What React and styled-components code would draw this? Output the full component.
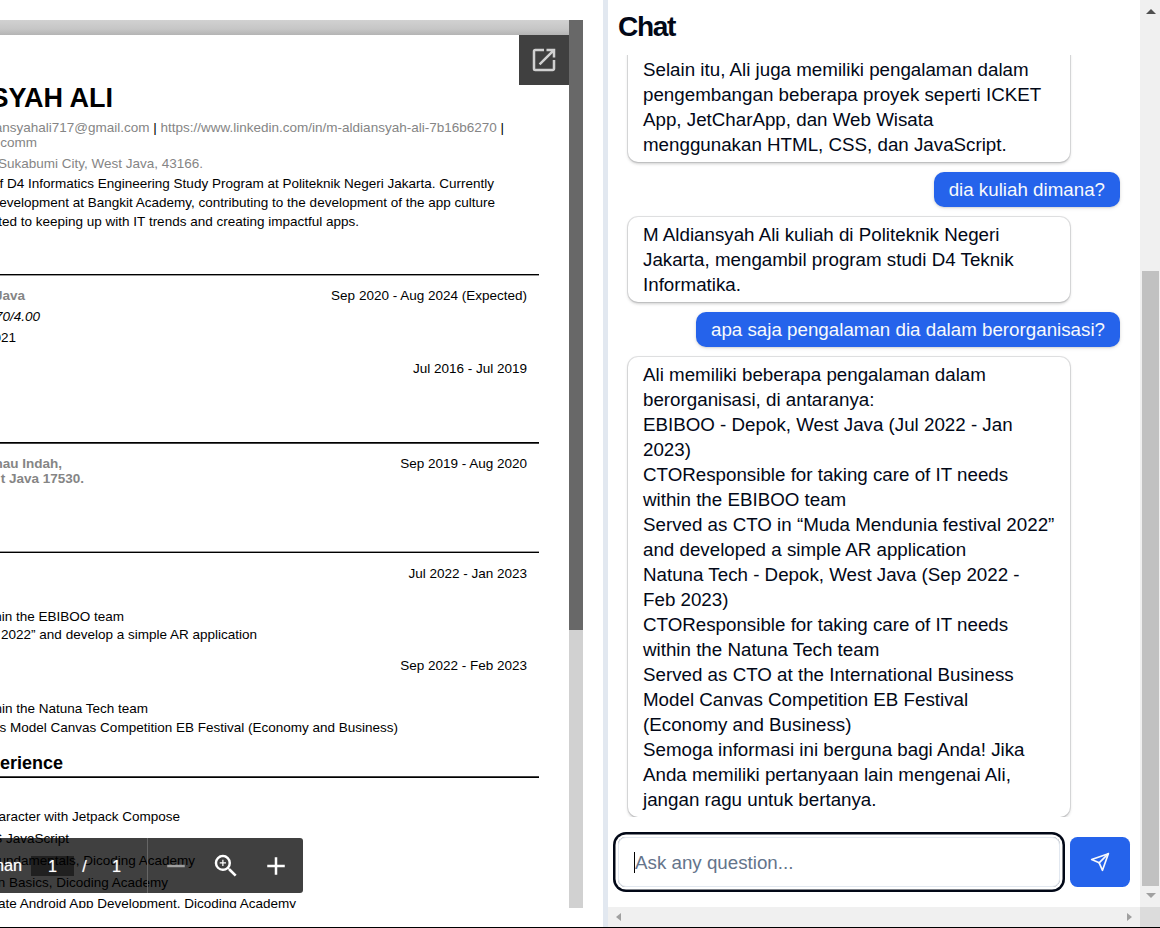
import React from "react";
import styled, { createGlobalStyle, css } from "styled-components";
import { MdOpenInNew, MdRemove, MdZoomIn, MdAdd } from "react-icons/md";

const GlobalStyle = createGlobalStyle`
  * { box-sizing: border-box; }
  html, body { margin: 0; padding: 0; background: #fff; overflow: hidden; }
  body { font-family: "Liberation Sans", Arial, sans-serif; color: #020817; }
`;

const Screen = styled.div`
  width: 1160px;
  height: 928px;
  display: flex;
  overflow: hidden;
  border-bottom: 1px solid #000;
`;

const ViewerPane = styled.section`
  width: 603px;
  padding: 20px 20px 19px 0;
  display: flex;
`;

const Viewer = styled.div`
  position: relative;
  flex: 1;
  height: 888px;
  display: flex;
  overflow: hidden;
`;

const DocumentArea = styled.div`
  flex: 1;
  display: flex;
  flex-direction: column;
  overflow: hidden;
`;

const PageGap = styled.div`
  height: 15px;
  flex: none;
  background: linear-gradient(#d1d1d1, #c6c6c6 60%, #b4b4b4);
`;

const Page = styled.article`
  flex: 1;
  min-height: 0;
  overflow: hidden;
  background: #fff;
  color: #000;
  font-size: 13.5px;
  line-height: 15px;
`;

const Row = styled.div`
  display: flex;
  justify-content: flex-end;
  height: ${(p) => p.$h || 15}px;
  width: ${(p) => p.$end}px;
  margin-top: ${(p) => p.$gap || 0}px;
  white-space: pre;
`;

const SplitRow = styled.div`
  display: flex;
  justify-content: space-between;
  width: 527px;
  height: 15px;
  margin-top: ${(p) => p.$gap || 0}px;
`;

const Name = styled.h1`
  margin: 0;
  font-size: 27px;
  line-height: 30px;
  font-weight: 700;
`;

const SectionTitle = styled.h2`
  margin: 0;
  font-size: 18px;
  line-height: 20px;
  font-weight: 700;
`;

const Muted = styled.span`
  color: #858585;
`;

const Place = styled.div`
  display: flex;
  justify-content: flex-end;
  width: ${(p) => p.$end}px;
  color: #858585;
  font-weight: 700;
  white-space: pre;
`;

const Rule = styled.div`
  width: 539px;
  height: 2px;
  margin-top: ${(p) => p.$gap}px;
  border-top: 1px solid ${(p) => p.$top || "#000"};
  border-bottom: 1px solid ${(p) => p.$bottom || "#000"};
`;

const PdfTrack = styled.div`
  width: 14px;
  background: #d1d1d1;
`;

const PdfThumb = styled.div`
  height: 610px;
  background: #686868;
`;

const PopOut = styled.button`
  position: absolute;
  top: 15px;
  right: 14px;
  width: 50px;
  height: 50px;
  padding: 0;
  border: 0;
  display: flex;
  align-items: center;
  justify-content: center;
  background: #404040;
  color: #d1d1d1;
`;

const Toolbar = styled.div`
  position: absolute;
  left: 0;
  bottom: 15px;
  width: 302.5px;
  height: 55px;
  display: flex;
  align-items: center;
  border-radius: 0 3px 3px 0;
  background: rgba(0, 0, 0, 0.75);
  color: #fff;
  font-size: 16.25px;
`;

const PagerLabel = styled.span`
  display: flex;
  justify-content: flex-end;
  width: 22px;
  text-shadow: 0 0 1px rgba(255, 255, 255, 0.6);
`;

const PageNumber = styled.span`
  width: ${(p) => p.$w}px;
  margin-left: ${(p) => p.$gap || 0}px;
  height: 20px;
  line-height: 20px;
  text-align: center;
  text-shadow: 0 0 1px rgba(255, 255, 255, 0.6);
  ${(p) => p.$field && css`background: rgba(0, 0, 0, 0.5);`}
`;

const ZoomTools = styled.div`
  margin-left: auto;
  width: 155.5px;
  height: 55px;
  display: flex;
  align-items: center;
  padding-left: 12.75px;
  gap: 20px;
  border-left: 1px solid #666;
`;

const ToolIcon = styled.span`
  display: flex;
  width: 30px;
  height: 30px;
  align-items: center;
  justify-content: center;
  opacity: ${(p) => (p.$off ? 0.5 : 1)};
`;

const ChatPane = styled.section`
  flex: 1;
  border-left: 5px solid #e2e8f0;
  display: grid;
  grid-template-columns: 532px 20px;
  grid-template-rows: 907px 20px;
`;

const ChatBody = styled.div`
  display: flex;
  flex-direction: column;
  padding: 0 10px;
`;

const ChatTitle = styled.h2`
  margin: 0;
  height: 55px;
  flex: none;
  font-size: 28.125px;
  letter-spacing: -0.05em;
  line-height: 53px;
  font-weight: 700;
`;

const Messages = styled.div`
  height: 762px;
  flex: none;
  margin: 0 -10px;
  padding: 0 20px;
  display: flex;
  flex-direction: column;
  justify-content: flex-start;
  gap: 10px;
  overflow: hidden;
`;

const Bubble = styled.div`
  flex: none;
  white-space: pre;
  padding: 5px 15px;
  font-size: 18.75px;
  line-height: 25px;
  border-radius: 10px;
  ${(p) =>
    p.$mine
      ? css`
          align-self: flex-end;
          background: #2563eb;
          color: #f8fafc;
          box-shadow: 0 1px 4px rgba(0, 0, 0, 0.1), 0 1px 2px rgba(0, 0, 0, 0.1);
        `
      : css`
          align-self: flex-start;
          width: 442px;
          background: #fff;
          box-shadow: 0 0 0 1px rgba(2, 8, 23, 0.1), 0 1.25px 3.75px rgba(0, 0, 0, 0.1),
            0 1.25px 2.5px rgba(0, 0, 0, 0.1);
        `}
  ${(p) =>
    p.$clipped &&
    css`
      margin-top: -3px;
      border-top-left-radius: 0;
      border-top-right-radius: 0;
    `}
`;

const Composer = styled.form`
  display: flex;
  gap: 10px;
  margin-top: 20px;
`;

const Field = styled.div`
  width: 442px;
  height: 50px;
  padding: 1px 15px 0;
  display: flex;
  align-items: center;
  border: 1px solid #e2e8f0;
  border-radius: 8px;
  box-shadow: 0 0 0 2.5px #fff, 0 0 0 5px #020817;
  font-size: 18.75px;
  color: #64748b;
`;

const Caret = styled.i`
  width: 1px;
  height: 21px;
  background: #000;
`;

const SendButton = styled.button`
  width: 60px;
  height: 50px;
  padding: 0;
  border: 0;
  border-radius: 7.5px;
  display: flex;
  align-items: center;
  justify-content: center;
  background: #2563eb;
  color: #f8fafc;
`;

const VTrack = styled.div`
  background: #f0f0f0;
  display: flex;
  flex-direction: column;
  align-items: center;
  padding: 9px 1px 9px 2px;
`;

const VThumb = styled.div`
  width: 17px;
  height: 615px;
  margin: auto 0 7px;
  background: #c1c1c1;
`;

const HTrack = styled.div`
  background: #f0f0f0;
  display: flex;
  align-items: center;
  justify-content: space-between;
  padding: 0 8px;
`;

const Corner = styled.div`
  background: #dcdcdc;
`;

const Arrow = styled.i`
  border: ${(p) => (p.$side ? "4.5px" : "5px")} solid transparent;
  ${(p) => p.$dir === "up" && css`border-top: 0; border-bottom: 5px solid #505050;`}
  ${(p) => p.$dir === "down" && css`border-bottom: 0; border-top: 5px solid #a0a0a0;`}
  ${(p) => p.$dir === "left" && css`border-left: 0; border-right: 5px solid #a0a0a0;`}
  ${(p) => p.$dir === "right" && css`border-right: 0; border-left: 5px solid #a0a0a0;`}
`;

const messages = [
  {
    clipped: true,
    text: "Selain itu, Ali juga memiliki pengalaman dalam\npengembangan beberapa proyek seperti ICKET\nApp, JetCharApp, dan Web Wisata\nmenggunakan HTML, CSS, dan JavaScript.",
  },
  { mine: true, text: "dia kuliah dimana?" },
  {
    text: "M Aldiansyah Ali kuliah di Politeknik Negeri\nJakarta, mengambil program studi D4 Teknik\nInformatika.",
  },
  { mine: true, text: "apa saja pengalaman dia dalam berorganisasi?" },
  {
    text: "Ali memiliki beberapa pengalaman dalam\nberorganisasi, di antaranya:\nEBIBOO - Depok, West Java (Jul 2022 - Jan\n2023)\nCTOResponsible for taking care of IT needs\nwithin the EBIBOO team\nServed as CTO in “Muda Mendunia festival 2022”\nand developed a simple AR application\nNatuna Tech - Depok, West Java (Sep 2022 -\nFeb 2023)\nCTOResponsible for taking care of IT needs\nwithin the Natuna Tech team\nServed as CTO at the International Business\nModel Canvas Competition EB Festival\n(Economy and Business)\nSemoga informasi ini berguna bagi Anda! Jika\nAnda memiliki pertanyaan lain mengenai Ali,\njangan ragu untuk bertanya.",
  },
];

function Resume() {
  return (
    <Page>
      <Row $end={113} $gap={48} $h={30}><Name>SYAH ALI</Name></Row>
      <Row $end={504} $gap={7}>
        <Muted>ansyahali717@gmail.com</Muted> | <Muted>https://www.linkedin.com/in/m-aldiansyah-ali-7b16b6270</Muted> |
      </Row>
      <Row $end={37}><Muted>comm</Muted></Row>
      <Row $end={203} $gap={6}><Muted>Sukabumi City, West Java, 43166.</Muted></Row>
      <Row $end={494} $gap={5}>f D4 Informatics Engineering Study Program at Politeknik Negeri Jakarta. Currently</Row>
      <Row $end={495} $gap={4}>evelopment at Bangkit Academy, contributing to the development of the app culture</Row>
      <Row $end={359} $gap={4}>ted to keeping up with IT trends and creating impactful apps.</Row>
      <Rule $gap={45} $bottom="#999" />
      <SplitRow $gap={12}><Place $end={25}>Java</Place><span>Sep 2020 - Aug 2024 (Expected)</span></SplitRow>
      <Row $end={40} $gap={6}><em>70/4.00</em></Row>
      <Row $end={16} $gap={6}>021</Row>
      <Row $end={527} $gap={16}>Jul 2016 - Jul 2019</Row>
      <Rule $gap={66} $bottom="#444" />
      <SplitRow $gap={12}><Place $end={62}>nau Indah,</Place><span>Sep 2019 - Aug 2020</span></SplitRow>
      <Place $end={84}>t Java 17530.</Place>
      <Rule $gap={65} $top="#999" />
      <Row $end={527} $gap={13}>Jul 2022 - Jan 2023</Row>
      <Row $end={124} $gap={28}>hin the EBIBOO team</Row>
      <Row $end={257} $gap={3}>2022” and develop a simple AR application</Row>
      <Row $end={527} $gap={16}>Sep 2022 - Feb 2023</Row>
      <Row $end={148} $gap={28}>hin the Natuna Tech team</Row>
      <Row $end={398} $gap={4}>s Model Canvas Competition EB Festival (Economy and Business)</Row>
      <Row $end={63} $gap={18} $h={20}><SectionTitle>erience</SectionTitle></Row>
      <Rule $gap={3} $top="#444" />
      <Row $end={180} $gap={31}>aracter with Jetpack Compose</Row>
      <Row $end={69} $gap={7}>S JavaScript</Row>
      <Row $end={195} $gap={7}>undamentals, Dicoding Academy</Row>
      <Row $end={168} $gap={7}>n Basics, Dicoding Academy</Row>
      <Row $end={296} $gap={6}>ate Android App Development, Dicoding Academy</Row>
    </Page>
  );
}

export default function App() {
  return (
    <>
      <GlobalStyle />
      <Screen>
        <ViewerPane>
          <Viewer>
            <DocumentArea>
              <PageGap />
              <Resume />
            </DocumentArea>
            <PdfTrack><PdfThumb /></PdfTrack>
            <PopOut aria-label="Pop-out"><MdOpenInNew size={30} /></PopOut>
            <Toolbar>
              <PagerLabel>man</PagerLabel>
              <PageNumber $field $gap={9} $w={43}>1</PageNumber>
              <PageNumber $w={21}>/</PageNumber>
              <PageNumber $w={43}>1</PageNumber>
              <ZoomTools>
                <ToolIcon $off><MdRemove size={30} /></ToolIcon>
                <ToolIcon><MdZoomIn size={30} /></ToolIcon>
                <ToolIcon><MdAdd size={30} /></ToolIcon>
              </ZoomTools>
            </Toolbar>
          </Viewer>
        </ViewerPane>
        <ChatPane>
          <ChatBody>
            <ChatTitle>Chat</ChatTitle>
            <Messages>
              {messages.map((m) => (
                <Bubble key={m.text} $mine={m.mine} $clipped={m.clipped}>{m.text}</Bubble>
              ))}
            </Messages>
            <Composer>
              <Field><Caret />Ask any question...</Field>
              <SendButton type="button" aria-label="Send">
                <svg width="20" height="20" viewBox="0 0 24 24" fill="none" stroke="currentColor" strokeWidth="2" strokeLinecap="round" strokeLinejoin="round">
                  <path d="m22 2-7 20-4-9-9-4Z" />
                  <path d="M22 2 11 13" />
                </svg>
              </SendButton>
            </Composer>
          </ChatBody>
          <VTrack><Arrow $dir="up" /><VThumb /><Arrow $dir="down" /></VTrack>
          <HTrack><Arrow $side $dir="left" /><Arrow $side $dir="right" /></HTrack>
          <Corner />
        </ChatPane>
      </Screen>
    </>
  );
}
